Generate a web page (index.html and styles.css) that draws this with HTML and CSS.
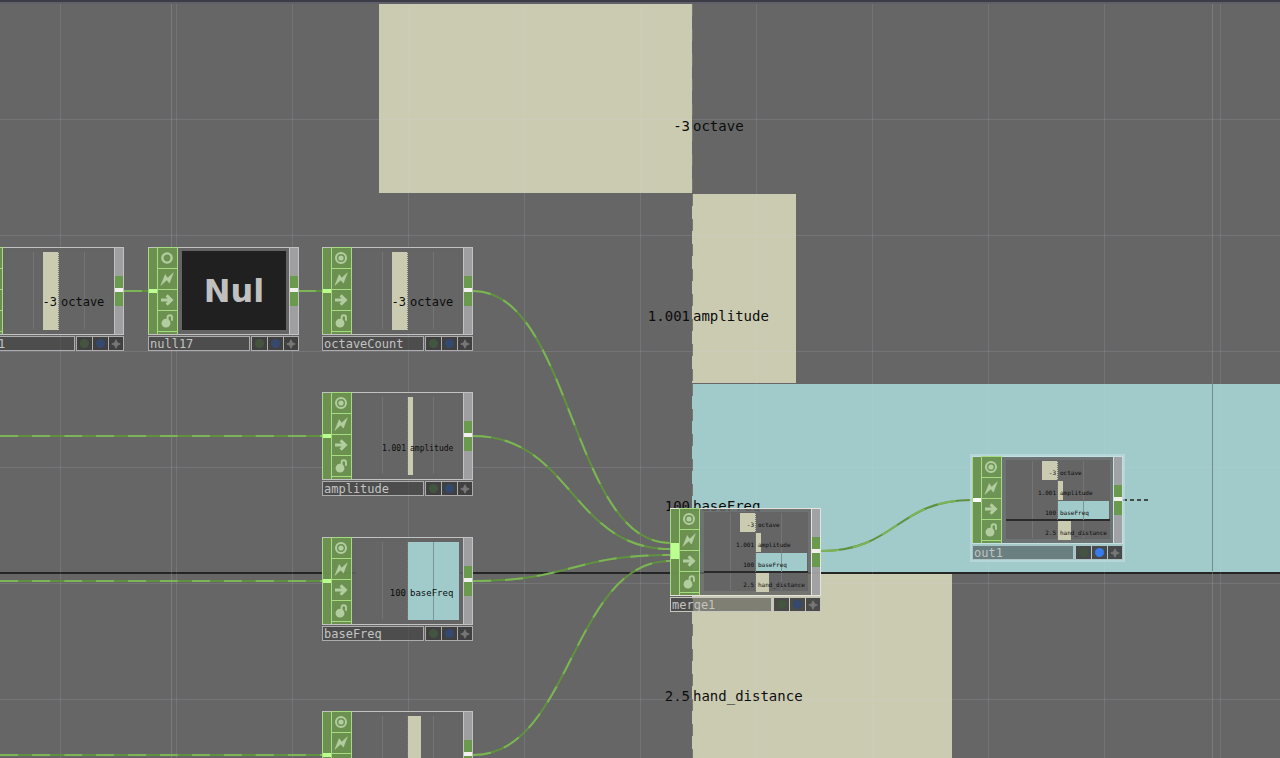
FILE: index.html
```
<!DOCTYPE html>
<html lang="en">
<head>
    <meta charset="UTF-8">
    <meta name="viewport" content="width=device-width, initial-scale=1.0">
    <title>Network Editor</title>
    <link rel="stylesheet" href="styles.css">
</head>
<body>
    <svg class="symbols" aria-hidden="true">
        <symbol id="icon-target" viewBox="0 0 14 14">
            <circle cx="7" cy="7" r="5" fill="none" stroke="currentColor" stroke-width="2"/>
            <circle cx="7" cy="7" r="2.6" fill="currentColor"/>
        </symbol>
        <symbol id="icon-ring" viewBox="0 0 14 14">
            <circle cx="7" cy="7" r="4.6" fill="none" stroke="currentColor" stroke-width="2.4"/>
        </symbol>
        <symbol id="icon-bolt" viewBox="0 0 14 14">
            <path d="M0.8 13.4 L5.2 2.6 L7.6 6 L13.4 0.8 L9.4 11.2 L6.8 8 Z" fill="currentColor" stroke="currentColor" stroke-width=".5"/>
        </symbol>
        <symbol id="icon-arrow" viewBox="0 0 14 14">
            <path d="M1 7 H11 M6.6 2.4 L11.4 7 L6.6 11.6" fill="none" stroke="currentColor" stroke-width="3"/>
        </symbol>
        <symbol id="icon-lock" viewBox="0 0 14 14">
            <circle cx="6" cy="9.2" r="4.4" fill="currentColor"/>
            <path d="M7.6 6 V3.4 A2.2 2.2 0 0 1 12 3.4 V6.8" fill="none" stroke="currentColor" stroke-width="1.9"/>
        </symbol>
        <symbol id="icon-plus" viewBox="0 0 14 14">
            <path d="M7 2 L8.6 5.4 L12 7 L8.6 8.6 L7 12 L5.4 8.6 L2 7 L5.4 5.4 Z" fill="currentColor" stroke="currentColor"/>
        </symbol>
    </svg>

    <main class="network">
        <div class="backdrop" id="backdrop"></div>
        <div class="gridlines"></div>
        <svg class="wires" id="wires"></svg>
        <div id="nodes"></div>
    </main>
    <script src="script.js"></script>
</body>
</html>
```
FILE: styles.css
```
* {
    box-sizing: border-box;
}

body {
    margin: 0;
    overflow: hidden;
    background: #666;
    font-family: "DejaVu Sans Mono", monospace;
    color: #0c0c0c;
}

button {
    margin: 0;
    padding: 0;
    border: 0;
    font: inherit;
}

.symbols {
    display: none;
}

.network {
    position: relative;
    height: 100vh;
    overflow: hidden;
    border-top: 2px solid #3c3c48;
}

.network::before {
    content: "";
    display: block;
    height: 2px;
    background: #606069;
}

/* bar charts, used for the backdrop and inside the nodes */
.bar-row {
    display: grid;
    grid-template-columns: minmax(0, 1fr) minmax(0, 1fr);
    position: relative;
}

.bar {
    grid-area: 1 / 2;
    background: #cbcbb2;
}

.bar.negative {
    grid-area: 1 / 1;
    justify-self: end;
}

.bar.cyan {
    background: #a1caca;
}

.value,
.channel {
    grid-area: 1 / 1;
    align-self: center;
    justify-self: end;
    line-height: 1;
    white-space: nowrap;
    z-index: 1;
}

.channel {
    grid-area: 1 / 2;
    justify-self: start;
}

.backdrop {
    display: grid;
    gap: 1px;
    position: relative;
    isolation: isolate;
    font-size: 14px;
}

.backdrop .bar-row {
    grid-template-columns: minmax(0, 692fr) minmax(0, 588fr);
    height: 189px;
}

.backdrop .value,
.backdrop .channel {
    padding: 55px 2px 0 1px;
}

.backdrop .bar-row::before {
    content: "";
    grid-area: 1 / 2;
    width: 1px;
    background: repeating-linear-gradient(#77776e 0 12px, transparent 12px 25px);
    z-index: 1;
}

.backdrop .bar-row:nth-child(3)::after {
    content: "";
    position: absolute;
    right: 0;
    bottom: -1px;
    left: 0;
    height: 2px;
    background: #242626;
}

.gridlines {
    position: absolute;
    inset: 2px 0 0;
    background:
        linear-gradient(rgba(190, 190, 220, .22), rgba(190, 190, 220, .22)) 171px 0 / 1px 100% no-repeat,
        linear-gradient(#778a8c, #778a8c) 1212px 379px / 1px 188px no-repeat,
        linear-gradient(rgba(160, 160, 150, .35), rgba(160, 160, 150, .35)) 1212px 0 / 1px 100% no-repeat,
        linear-gradient(90deg, rgba(215, 215, 250, .12) 1px, transparent 1px) 60px 0 / 116px 116px,
        linear-gradient(rgba(215, 215, 250, .12) 1px, transparent 1px) 0 115px / 116px 116px;
}

.wires {
    position: absolute;
    inset: -2px 0 0;
    width: 100%;
    height: 100%;
    overflow: visible;
    fill: none;
}

.wire {
    stroke: #60913f;
    stroke-width: 2;
}

.wire-flow {
    stroke: #7cb456;
    stroke-width: 2;
    stroke-dasharray: 18 14;
}

.wire-open {
    stroke: #424b4b;
    stroke-width: 2;
    stroke-dasharray: 4 3;
}

/* operator nodes */
.node {
    position: absolute;
    width: 151px;
    margin-top: -2px;
    --line: #c2c2c2;
    --edge: #a6dc80;
}

.node.current {
    --line: #e4e4da;
}

.node.selected {
    --line: #c5e0e0;
    outline: 2px solid rgba(197, 224, 224, .6);
}

.node-body {
    display: grid;
    grid-template-columns: 9px 21px 1fr 10px;
    height: 88px;
    margin-bottom: 1px;
    border: solid var(--line);
    border-width: 1px 0;
    background: rgba(100, 100, 100, .85);
}

.input {
    padding-top: 41px;
    border: 1px solid var(--edge);
    border-width: 0 0 0 1px;
    background: rgba(109, 159, 73, .75);
}

.input::before {
    content: "";
    display: block;
    height: 4px;
    background: #baff90;
}

.merge .input {
    padding-top: 34px;
}

.merge .input::before {
    height: 16px;
    background: #baff90;
}

.selected .input::before {
    background: #fff;
}

.flags {
    display: grid;
    grid-template-rows: repeat(4, 21px) 1fr;
    margin-top: -1px;
    border: solid var(--edge);
    border-width: 1px 1px 0;
    background: rgba(109, 159, 73, .75);
}

.flag {
    display: grid;
    place-items: center;
    padding-right: 1px;
    border-bottom: 1px solid var(--edge);
    background: none;
    color: #b2cd9f;
}

.flag svg {
    width: 14px;
    height: 14px;
}

.viewer {
    display: grid;
    position: relative;
    height: 79px;
    margin: 3px 3px 3px 4px;
    background: #656565;
}

.viewer::before {
    content: "";
    position: absolute;
    inset: 1px 25% 1px;
    border: solid #747474;
    border-width: 0 1px;
}

.viewer::after {
    content: "";
    position: absolute;
    inset: 1px 50% 1px auto;
    border-left: 1px dotted #777;
}

.viewer .bar-row {
    font-size: 12px;
    margin: 1px 0 0;
}

.viewer .bar-row:has(.cyan)::after {
    content: "";
    position: absolute;
    inset: 0 25% 0 auto;
    border-left: 1px solid #799797;
}

.viewer .value,
.viewer .channel {
    padding: 22px 2px 0;
}

.viewer.size-9 .bar-row {
    font-size: 9px;
}

.viewer.size-8 .bar-row {
    font-size: 8px;
}

.viewer.size-9 .value,
.viewer.size-9 .channel,
.viewer.size-8 .value,
.viewer.size-8 .channel {
    padding-top: 25px;
}

.viewer.multi {
    grid-template-rows: repeat(4, 19px);
    row-gap: 1px;
    padding-top: 1px;
}

.viewer.multi .bar-row {
    margin: 0;
    font-size: 6px;
}

.viewer.multi .value,
.viewer.multi .channel {
    padding: 4px 2px 0;
}

.viewer.multi .bar-row:nth-child(3)::before {
    content: "";
    position: absolute;
    right: 0;
    bottom: -1px;
    left: 0;
    height: 2px;
    background: #2a2a2a;
}

.viewer.text {
    place-items: center;
    background: #202020;
    color: #c0c0c0;
    font: bold 32px "DejaVu Sans", sans-serif;
}

.viewer.text::before,
.viewer.text::after {
    display: none;
}

.output {
    padding-top: 28px;
    border: 1px solid var(--line);
    border-width: 0 1px;
    background: rgba(172, 172, 176, .82);
}

.output::before {
    content: "";
    display: block;
    height: 30px;
    background: linear-gradient(#6a9a4e 12px, #f0f0ec 12px, #f0f0ec 16px, #6a9a4e 16px);
}

.node-footer {
    display: grid;
    grid-template-columns: 1fr 16px 16px 16px;
    height: 15px;
}

.name {
    height: 15px;
    margin-right: 1px;
    padding-left: 1px;
    border: 1px solid color-mix(in srgb, var(--line) 80%, #555);
    background: rgba(52, 52, 52, .5);
    color: #c3c3c3;
    font-size: 12px;
    line-height: 15px;
    white-space: nowrap;
}

/* node sits partly outside the left edge of the network */
.clipped .name {
    padding-left: 24px;
}

.toggle {
    display: grid;
    place-items: center;
    border: 1px solid color-mix(in srgb, var(--line) 80%, #555);
    border-right-width: 0;
    background: rgba(60, 60, 60, .9);
    color: #777;
}

.toggle:last-child {
    border-right-width: 1px;
}

.toggle svg {
    width: 12px;
    height: 12px;
}

.dot {
    width: 9px;
    height: 9px;
    border-radius: 50%;
    background: #43553f;
}

.dot.display {
    background: #35486d;
}

.selected .dot.display {
    background: #377bee;
}
```
FILE: script.js
```
const channels = {
    octave: { value: -3, big: 313, small: 16 },
    amplitude: { value: 1.001, big: 104, small: 5 },
    baseFreq: { value: 100, big: 588, small: 51, color: 'cyan' },
    hand_distance: { value: 2.5, big: 260, small: 13 }
};
const all = Object.keys(channels);

const nodes = [
    { x: -27, y: 247, name: '1', show: ['octave'], cls: 'clipped' },
    { x: 148, y: 247, name: 'null17', text: 'Nul' },
    { x: 322, y: 247, name: 'octaveCount', show: ['octave'] },
    { x: 322, y: 392, name: 'amplitude', show: ['amplitude'], size: 'size-8' },
    { x: 322, y: 537, name: 'baseFreq', show: ['baseFreq'], size: 'size-9' },
    { x: 322, y: 711, name: 'hand_distance', show: ['hand_distance'], size: 'size-8' },
    { x: 670, y: 508, name: 'merge1', show: all, cls: 'merge current' },
    { x: 972, y: 456, name: 'out1', show: all, cls: 'selected' }
];

// [x1, y1, x2, y2]
const wires = [
    [124, 291, 148, 291],
    [298, 291, 322, 291],
    [0, 436, 322, 436],
    [0, 581, 322, 581],
    [0, 755, 322, 755],
    [473, 291, 670, 543],
    [473, 436, 670, 549],
    [473, 581, 670, 555],
    [473, 755, 670, 561],
    [821, 551, 972, 500]
];

function barRow(name, key) {
    const c = channels[name];
    const cls = ['bar', c.value < 0 ? 'negative' : '', c.color || ''].join(' ');
    const width = key === 'big' && c.color ? '100%' : c[key] + 'px';
    return `<div class="bar-row">
        <div class="${cls}" style="width: ${width}"></div>
        <span class="value">${c.value}</span>
        <span class="channel">${name}</span>
    </div>`;
}

function icon(id) {
    return `<svg aria-hidden="true"><use href="#icon-${id}"/></svg>`;
}

function flag(id, label) {
    return `<button class="flag" type="button" aria-label="${label}">${icon(id)}</button>`;
}

function viewer(n) {
    if (n.text) {
        return `<div class="viewer text">${n.text}</div>`;
    }
    const cls = n.show.length > 1 ? 'multi' : n.size || '';
    return `<div class="viewer ${cls}">${n.show.map(c => barRow(c, 'small')).join('')}</div>`;
}

function node(n) {
    return `<section class="node ${n.cls || ''}" style="left: ${n.x}px; top: ${n.y}px">
        <div class="node-body">
            <div class="input"></div>
            <div class="flags">
                ${flag(n.text ? 'ring' : 'target', 'Viewer')}
                ${flag('bolt', 'Bypass')}
                ${flag('arrow', 'Export')}
                ${flag('lock', 'Lock')}
            </div>
            ${viewer(n)}
            <div class="output"></div>
        </div>
        <div class="node-footer">
            <span class="name">${n.name}</span>
            <button class="toggle" type="button" aria-label="Render"><span class="dot"></span></button>
            <button class="toggle" type="button" aria-label="Display"><span class="dot display"></span></button>
            <button class="toggle" type="button" aria-label="Activate">${icon('plus')}</button>
        </div>
    </section>`;
}

function wire([x1, y1, x2, y2]) {
    const mid = (x1 + x2) / 2;
    const d = `M${x1} ${y1} C${mid} ${y1} ${mid} ${y2} ${x2} ${y2}`;
    return `<path class="wire" d="${d}"/><path class="wire-flow" d="${d}"/>`;
}

document.getElementById('backdrop').innerHTML = all.map(c => barRow(c, 'big')).join('');
document.getElementById('wires').innerHTML = wires.map(wire).join('') + '<path class="wire-open" d="M1123 500 H1149"/>';
document.getElementById('nodes').innerHTML = nodes.map(node).join('');
```
